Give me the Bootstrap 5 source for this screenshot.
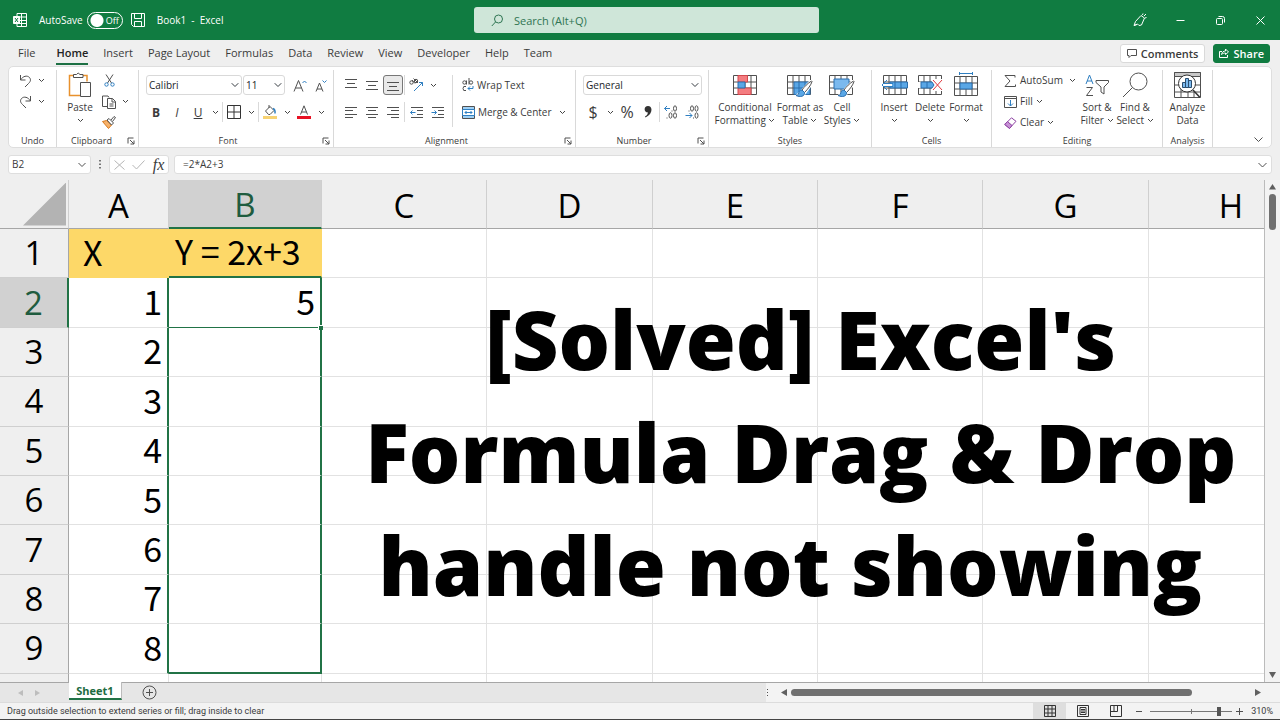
<!DOCTYPE html>
<html lang="en">
<head>
<meta charset="utf-8">
<meta name="viewport" content="width=device-width, initial-scale=1">
<title>Book1 - Excel</title>
<link href="https://cdn.jsdelivr.net/npm/bootstrap@5.3.0/dist/css/bootstrap.min.css" rel="stylesheet">
<style>
:root{--xl:#107c41;--ink:#3b3b3b;--line:#d9d9d9;--sel:#217346}
body{font-family:"Open Sans","Noto Sans",sans-serif;font-size:10px;line-height:13px;color:var(--ink);background:#efefef}
svg{display:block;fill:none;stroke:#505050;stroke-width:1;flex:none}
button,input,select{font-family:inherit;color:inherit}
.app{height:100vh;min-height:720px;overflow:hidden}
.titlebar{background:var(--xl);height:40px;color:#fff}
.titlebar svg{stroke:#fff}
.tb-left{flex:1 1 13px;padding-left:13px}
.tb-right{flex:1 1 0px}
.search-box{width:345px;height:26px;background:#cfe6d9;border-radius:3px;padding-left:17px;gap:10px;color:#2f7553}
.search-box svg{stroke:#2f7553}
.search-box input{font-size:11px;height:26px}
.search-box input::placeholder{color:#2f7553}
.bare{background:none;border:0;padding:0;outline:0}
.save-switch{width:36px;height:17px}
.save-switch .form-check-input{width:36px;height:17px;margin:0;background-color:transparent;border-color:#fff;background-image:radial-gradient(circle at 9px 50%,#fff 6px,transparent 7px);background-position:0 0;background-size:100%}
.save-switch label{position:absolute;left:19px;top:2px;font-size:9px;line-height:13px;pointer-events:none}
.win{width:40px;height:40px;display:grid;place-items:center}
.tabs{height:26px;padding:0 10px 0 18px;font-size:11px}
.tabs nav{gap:15px}
.tabs nav a{color:var(--ink);text-decoration:none;line-height:21px;height:23px;border-bottom:2px solid transparent}
.tabs nav a:first-child{margin-right:6px}
.tabs nav a.active{font-weight:600;color:#222;border-color:#1d7044}
.act{height:19px;border-radius:3px;border:1px solid var(--line);background:#fff;font-size:11px;font-weight:600;gap:4px;padding:0 6px}
.act-share{background:var(--xl);border-color:var(--xl);color:#fff;padding:0 5px}
.act-share svg{stroke:#fff}
.ribbon{height:82px;margin:0 8px;background:#fff;border:1px solid #dedede;border-radius:5px;padding-top:3px}
.grp{border-right:1px solid var(--line)}
.grp-foot{height:13px;font-size:9px;line-height:13px}
.grp-foot svg{position:absolute;right:3px;top:3px}
.g-undo{width:48px}.g-clip{width:82px}.g-font{width:195px}.g-align{width:242px}.g-num{width:133px}
.g-style{width:163px}.g-cells{width:120px}.g-edit{width:171px}.g-ana{width:50px}
.undo-pad{padding-left:6px}
.tool{background:none;border:0;padding:0;width:20px;height:20px;display:grid;place-items:center;flex:none;font-size:12px}
.tool-on{background:#e9e9e9;border:1px solid #777;border-radius:3px}
.drop{width:12px}
.rule{width:1px;height:20px;background:var(--line);flex:none}
.rule-tall{width:1px;height:52px;background:var(--line);margin:0 5px}
.two-rows{padding:5px 0 0 7px}
.tool-row{display:flex;gap:1px;align-items:center;height:20px;margin-bottom:7px}
.three-row{display:flex;align-items:center;height:21px}
.pick{height:20px;font-size:10px;line-height:12px;padding:0 12px 0 2px;border:1px solid var(--line);border-radius:3px;background-size:8px;background-position:right 2px center}
.pick-font{width:96px}.pick-size{width:42px}.pick-num{width:119px}
.big{background:none;border:0;padding:2px 0 0;display:flex;flex-direction:column;align-items:center;line-height:13px;white-space:nowrap}
.big svg.pic{margin-bottom:3px}
.b64{width:64px}.b46{width:46px}.b38{width:38px}.b36{width:36px}
.inl{background:none;border:0;padding:0;display:flex;align-items:center;gap:3px;white-space:nowrap}
.chev{display:inline-block;vertical-align:1px;stroke:#444}
.fx-row{height:32px;padding:7px 8px 6px;gap:5px}
.fx-box{height:19px;background:#fff;border:1px solid #dedede;border-radius:3px}
.fx-name{width:83px}.fx-tools{width:60px}
.fx-name input{width:60px;padding-left:3px}
.fx-mark{font:italic 16px/15px "Liberation Serif",serif}
.sheet{position:relative;overflow:hidden;background:#fff}
.grid{table-layout:fixed;width:1314px;height:543px;border-collapse:separate;border-spacing:0;color:#000}
.grid tbody tr{height:49px}
.grid th,.grid td{padding:0;line-height:40px;border:0 solid #e2e2e2;border-width:0 1px 1px 0;overflow:hidden;white-space:nowrap;vertical-align:middle}
.grid thead th{height:49px;background:#efefef;font-size:33px;font-weight:400;text-align:center;padding-top:3px;border-color:#cfcfcf;border-bottom-color:#a6a6a6}
.grid thead th:first-child{padding-top:0}
.grid tbody th{background:#efefef;font-size:33px;font-weight:400;text-align:center;border-color:#cfcfcf;border-right-color:#a6a6a6}
.grid td{font-family:"Noto Sans CJK JP","Open Sans",sans-serif;font-size:34px;text-align:right;padding:0 5px 3px 0}
.grid thead th.hot{background:#d1d1d1;color:#1f5c3f;border-bottom:2px solid var(--sel)}
.grid tbody th.hot{background:#d1d1d1;color:#1f5c3f;border-right:2px solid var(--sel)}
.grid td.gold{background:#fdd868;border-color:#fdd868;text-align:left;padding-left:14px}
.grid td.gold-y{padding-left:6px;border-bottom:2px solid var(--sel)}
.grid td.pre{border-right:2px solid var(--sel)}
.grid td.pick-cell{border-right:2px solid var(--sel)}
.grid td.first{position:relative;overflow:visible;border-bottom-color:var(--sel)}
.grid td.first::after{content:"";position:absolute;right:-3px;bottom:-3px;width:5px;height:5px;background:var(--sel);border:solid #fff;border-width:1px 0 0 1px}
.grid td.last{border-bottom:2px solid var(--sel)}
.c-h{width:69px}.c-a{width:100px}.c-b{width:153px}.c-n{width:165px}.c-w{width:166px}
.corner{width:43px;height:43px;margin:0 2px 0 auto;background:#b3b3b3;clip-path:polygon(100% 0,100% 100%,0 100%)}
.caption-over{position:absolute;left:321px;right:-17px;top:102px;margin:0;text-align:center;color:#000;font-size:81px;line-height:113px;font-weight:800}
.vbar{width:17px;background:#f3f3f3;border-left:1px solid #bbb}
.knob-v{width:7px;height:36px;background:#707070;border-radius:4px}
.sheetbar{height:20px;background:#e6e6e6;border-top:1px solid #a6a6a6}
.page-nav{width:69px;padding-left:18px;gap:12px}
.sheet-tab{width:53px;height:18px;margin-top:-1px;background:#fff;border:0;border-bottom:2px solid var(--sel);border-right:1px solid #bbb;color:#1d6b41;font-weight:700;font-size:11px;line-height:15px;padding:0}
.hbar{width:514px;background:#f3f3f3;gap:4px;padding:0 19px 0 0}
.knob-h{width:401px;height:7px;background:#707070;border-radius:4px}
.statusbar{height:18px;background:#f3f3f3;border-top:1px solid #dcdcdc;border-bottom:1px solid #444;font-family:Roboto,"Open Sans",sans-serif;font-size:9px;padding:0 7px}
.view{width:33px;height:16px;border:0;padding:0;background:none;display:grid;place-items:center}
.view-on{background:#dedede}
.zoomer{appearance:none;width:82px;height:12px;margin:0;background:linear-gradient(#777,#777) center/100% 1px no-repeat,linear-gradient(#777,#777) center/1px 5px no-repeat}
.zoomer::-webkit-slider-thumb{appearance:none;width:4px;height:9px;background:#555}
</style>
</head>
<body>
<svg width="0" height="0" class="position-absolute" aria-hidden="true">
  <symbol id="cv" viewBox="0 0 7 5"><path d="M1 1l2.500 2.500L6 1"/></symbol>
  <symbol id="launch" viewBox="0 0 8 8"><path d="M1 6.500V1h5.500M3 3l4 4M7 3.500V7H3.500"/></symbol>
  <symbol id="tablegrid" viewBox="0 0 24 20"><path fill="#fff" d="M.5.500h23v19H.5zM.5 7h23M.5 13h23M6 .5v19M12 .5v19M18 .5v19"/></symbol>
  <symbol id="brush" viewBox="0 0 18 18"><path fill="#fff" stroke="#fff" stroke-width="3" d="M16 1L7 11l-5 5 6-1 9-12z"/><path fill="#fff" d="M16.500 1C13 3 9 7 7 10l2.500 2.500C13 9 16 5 17 1.500z"/><path fill="#5aa7e6" stroke="#2b6fae" d="M7 10c-3 0-3 2-3.500 4-.5 1-1.500 1.500-2.500 1.500 4 2 9 1 8.500-3z"/></symbol>
</svg>
<div class="app d-flex flex-column">
  <header class="titlebar d-flex align-items-center flex-shrink-0">
    <div class="tb-left d-flex align-items-center">
      <svg width="14" height="14" viewBox="0 0 14 14"><path d="M4 .5h9.500v13H4zM4 4h9.500M4 7.500h9.500M4 10.500h9.500M8.500.5v13"/><path fill="#fff" d="M.5 3.500h6v7h-6z"/><path stroke="#107c41" d="M2 5l3 4M5 5L2 9"/></svg>
      <span class="ms-2 ps-1 me-1">AutoSave</span>
      <div class="save-switch form-switch position-relative p-0"><input class="form-check-input" type="checkbox" role="switch" id="autosave" aria-label="AutoSave"><label for="autosave">Off</label></div>
      <button class="bare ms-2" aria-label="Save"><svg width="14" height="14" viewBox="0 0 14 14"><path d="M.5.500h13v13h-11l-2-2zM3.500.5v5h7v-5M3.500 13.500v-5h7v5"/></svg></button>
      <span class="ms-2 ps-1">Book1&nbsp; -&nbsp; Excel</span>
    </div>
    <div class="search-box d-flex align-items-center">
      <svg width="13" height="13" viewBox="0 0 13 13"><circle cx="7.500" cy="5" r="4"/><path d="M4.500 8L.8 12"/></svg>
      <input class="bare flex-grow-1" type="search" placeholder="Search (Alt+Q)" aria-label="Search">
    </div>
    <div class="tb-right d-flex justify-content-end">
      <button class="bare win" aria-label="Coming soon"><svg width="14" height="14" viewBox="0 0 14 14"><path d="M1 12.500l1.500-4L8 2.500l3.500 2.500-3 7-2.500.5-1.500-1.500zM1 12.500l3-1M9.500 2L10 .5M11 3l2-2M12 5l1.500-.5"/></svg></button>
      <button class="bare win" aria-label="Minimize"><svg width="9" height="9" viewBox="0 0 9 9"><path d="M.5 4.500h8"/></svg></button>
      <button class="bare win" aria-label="Restore"><svg width="9" height="9" viewBox="0 0 9 9"><rect x=".5" y="2.500" width="6" height="6" rx="1"/><path d="M2.500.5h4q2 0 2 2v4"/></svg></button>
      <button class="bare win" aria-label="Close"><svg width="9" height="9" viewBox="0 0 9 9"><path d="M.5.500l8 8M8.500.500l-8 8"/></svg></button>
    </div>
  </header>

  <div class="tabs d-flex align-items-center justify-content-between flex-shrink-0">
    <nav class="d-flex text-nowrap">
      <a href="#">File</a><a href="#" class="active">Home</a><a href="#">Insert</a><a href="#">Page Layout</a><a href="#">Formulas</a><a href="#">Data</a><a href="#">Review</a><a href="#">View</a><a href="#">Developer</a><a href="#">Help</a><a href="#">Team</a>
    </nav>
    <div class="d-flex gap-2">
      <button class="act d-flex align-items-center"><svg width="10" height="9" viewBox="0 0 10 9"><path d="M.5.500h9v6H4L2 8.500v-2H.5z"/></svg>Comments</button>
      <button class="act act-share d-flex align-items-center"><svg width="10" height="10" viewBox="0 0 10 10"><path d="M3 3.500H.5v6h8V7M2.500 6.500C3 4 4.500 3 6.500 3V1L9.500 4l-3 2.500V5C5 5 3.500 5.500 2.500 6.500z"/></svg>Share</button>
    </div>
  </div>

  <section class="ribbon d-flex flex-shrink-0" aria-label="Home ribbon">
    <div class="grp g-undo d-flex flex-column">
      <div class="flex-grow-1 undo-pad">
        <div class="three-row"><button class="tool" aria-label="Undo"><svg width="13" height="14" viewBox="0 0 13 14"><path d="M1.500 1v5h5M1.500 6C4 2 8 1 10.500 3.500c2 2.500.5 4.500-1 6L6 13"/></svg></button><button class="tool drop" aria-label="Undo list"><svg class="chev" width="7" height="5"><use href="#cv"/></svg></button></div>
        <div class="three-row"><button class="tool" aria-label="Redo"><svg width="13" height="14" viewBox="0 0 13 14"><path d="M11.500 1v5h-5M11.500 6C9 2 5 1 2.500 3.500c-2 2.500-.5 4.500 1 6L7 13"/></svg></button><button class="tool drop" aria-label="Redo list"><svg class="chev" width="7" height="5"><use href="#cv"/></svg></button></div>
      </div>
      <div class="grp-foot text-center">Undo</div>
    </div>
    <div class="grp g-clip d-flex flex-column">
      <div class="flex-grow-1 d-flex ps-1">
        <button class="big b38"><svg class="pic" width="24" height="26" viewBox="0 0 24 26"><path stroke="#e8912d" stroke-width="1.500" d="M6 3.500H1.500v20H12M15 3.500h4v6"/><path fill="#fff" d="M5.500 5.500v-3h3q1.500-3 3.500 0h3v3z"/><path fill="#fff" d="M12.500 10.500h10v14h-10z"/></svg>Paste<svg class="chev mt-1" width="7" height="5"><use href="#cv"/></svg></button>
        <div>
          <div class="three-row"><button class="tool" aria-label="Cut"><svg width="11" height="13" viewBox="0 0 11 13"><path d="M2 .5l5.500 8.500M9 .5L3.500 9"/><circle cx="2.500" cy="10.500" r="1.700" stroke="#2f7fc1"/><circle cx="8.500" cy="10.500" r="1.700" stroke="#2f7fc1"/></svg></button></div>
          <div class="three-row"><button class="tool" aria-label="Copy"><svg width="14" height="14" viewBox="0 0 14 14"><path d="M5 11.500H.5V1H6l1 1.500"/><path fill="#fff" d="M5.500 3.500h5l3 3v7h-8zM10 3.500V7h3.500M7.500 9h4M7.500 11h4"/></svg></button><button class="tool drop" aria-label="Copy options"><svg class="chev" width="7" height="5"><use href="#cv"/></svg></button></div>
          <div class="three-row"><button class="tool" aria-label="Format Painter"><svg width="14" height="13" viewBox="0 0 14 13"><path fill="#f6b26b" stroke="#d87a1e" d="M.5 5.500l4-1 5 4.500-3 3.500z"/><path fill="#fff" d="M5 4l2-1.500 4.500 4.500-2 2zM9 4l3-3.500 1.500 1L10.500 5.500"/></svg></button></div>
        </div>
      </div>
      <div class="grp-foot text-center position-relative pe-2"><span class="pe-1">Clipboard</span><svg width="8" height="8"><use href="#launch"/></svg></div>
    </div>
    <div class="grp g-font d-flex flex-column">
      <div class="flex-grow-1 two-rows">
        <div class="tool-row"><select class="form-select pick pick-font" aria-label="Font"><option>Calibri</option></select><select class="form-select pick pick-size" aria-label="Font size"><option>11</option></select>
          <button class="tool ms-1" aria-label="Increase font size"><svg width="14" height="13" viewBox="0 0 14 13"><path d="M1 12.500L5.500 1.500 10 12.500M2.500 9h6"/><path stroke="#2f7fc1" d="M9.500 4l2-2 2 2"/></svg></button>
          <button class="tool" aria-label="Decrease font size"><svg width="14" height="13" viewBox="0 0 14 13"><path d="M2 12.500L5.500 4 9 12.500M3 10h5"/><path stroke="#2f7fc1" d="M8.500 1.500l2 2 2-2"/></svg></button></div>
        <div class="tool-row"><button class="tool fw-bold">B</button><button class="tool fst-italic">I</button><button class="tool text-decoration-underline">U</button><button class="tool drop" aria-label="Underline options"><svg class="chev" width="7" height="5"><use href="#cv"/></svg></button><span class="rule"></span>
          <button class="tool" aria-label="Borders"><svg width="14" height="14" viewBox="0 0 14 14"><path stroke="#333" d="M.5.500h13v13H.5zM7 .5v13M.5 7h13"/></svg></button><button class="tool drop" aria-label="Border options"><svg class="chev" width="7" height="5"><use href="#cv"/></svg></button><span class="rule"></span>
          <button class="tool" aria-label="Fill colour"><svg width="14" height="14" viewBox="0 0 14 14"><path fill="#f7d272" stroke="none" d="M0 11h14v3H0z"/><path d="M2.500 6l4.500-4.500L11 5.500 7 9.500H5.500zM6 3V0"/><path stroke="#2f7fc1" stroke-width="1.500" d="M10 3.500q2.500 1 2 5"/></svg></button><button class="tool drop" aria-label="Fill options"><svg class="chev" width="7" height="5"><use href="#cv"/></svg></button>
          <button class="tool" aria-label="Font colour"><svg width="14" height="14" viewBox="0 0 14 14"><path fill="#e81123" stroke="none" d="M0 11h14v3H0z"/><path d="M3.500 9.500L7 .8l3.500 8.700M4.500 7h5"/></svg></button><button class="tool drop" aria-label="Font colour options"><svg class="chev" width="7" height="5"><use href="#cv"/></svg></button></div>
      </div>
      <div class="grp-foot text-center position-relative pe-3">Font<svg width="8" height="8"><use href="#launch"/></svg></div>
    </div>
    <div class="grp g-align d-flex flex-column">
      <div class="flex-grow-1 d-flex two-rows">
        <div>
          <div class="tool-row"><button class="tool" aria-label="Top align"><svg width="12" height="14" viewBox="0 0 12 14"><path d="M0 1.500h12M2 5.500h8M0 9.500h12"/></svg></button><button class="tool" aria-label="Middle align"><svg width="12" height="12" viewBox="0 0 12 12"><path d="M0 2.500h12M2 6.500h8M0 10.500h12"/></svg></button><button class="tool tool-on" aria-label="Bottom align"><svg width="12" height="12" viewBox="0 0 12 12"><path d="M0 3.500h12M2 7.500h8M0 11.500h12"/></svg></button><span class="rule"></span>
            <button class="tool" aria-label="Orientation"><svg width="15" height="14" viewBox="0 0 15 14"><circle cx="2.500" cy="4.500" r="1.700"/><path d="M3 2l3 3.500M4.500.500L9 5"/><circle cx="7" cy="3" r="1.700"/><path stroke="#2f7fc1" d="M5 13l8.500-8.500M10 4.500h3.500V8"/></svg></button><button class="tool drop" aria-label="Orientation options"><svg class="chev" width="7" height="5"><use href="#cv"/></svg></button></div>
          <div class="tool-row"><button class="tool" aria-label="Align left"><svg width="12" height="13" viewBox="0 0 12 13"><path d="M0 1.500h12M0 4.500h8M0 8.500h12M0 11.500h8"/></svg></button><button class="tool" aria-label="Center"><svg width="12" height="13" viewBox="0 0 12 13"><path d="M0 1.500h12M2 4.500h8M0 8.500h12M2 11.500h8"/></svg></button><button class="tool" aria-label="Align right"><svg width="12" height="13" viewBox="0 0 12 13"><path d="M0 1.500h12M4 4.500h8M0 8.500h12M4 11.500h8"/></svg></button><span class="rule"></span>
            <button class="tool" aria-label="Decrease indent"><svg width="13" height="13" viewBox="0 0 13 13"><path d="M1 1.500h12M7 4.500h6M7 8.500h6M1 11.500h12"/><path stroke="#2f7fc1" d="M5.500 6.500h-5M2.500 4.500l-2 2 2 2"/></svg></button><button class="tool" aria-label="Increase indent"><svg width="13" height="13" viewBox="0 0 13 13"><path d="M1 1.500h12M7 4.500h6M7 8.500h6M1 11.500h12"/><path stroke="#2f7fc1" d="M.5 6.500h5M3.500 4.500l2 2-2 2"/></svg></button></div>
        </div>
        <span class="rule-tall"></span>
        <div class="ps-1">
          <div class="tool-row"><button class="inl"><svg width="12" height="14" viewBox="0 0 12 14"><circle cx="2.500" cy="4.500" r="1.700"/><path d="M4.500 2.500v4M7 0v6.500M4 8.500q-3-1-3 2t3 2"/><circle cx="9" cy="4.500" r="1.700"/><path stroke="#2f7fc1" d="M11 8v2.500H6M8 8.500l-2 2 2 2"/></svg>Wrap Text</button></div>
          <div class="tool-row"><button class="inl"><svg width="13" height="13" viewBox="0 0 13 13"><path fill="#9fd0f5" d="M.5.500h12v12H.5z"/><path fill="#fff" stroke="#2f7fc1" d="M.5 3.500h12v6H.5zM3 6.500h7M4.500 5L3 6.500 4.500 8M8.500 5L10 6.500 8.500 8"/></svg>Merge &amp; Center</button><button class="tool drop ms-1" aria-label="Merge options"><svg class="chev" width="7" height="5"><use href="#cv"/></svg></button></div>
        </div>
      </div>
      <div class="grp-foot text-center position-relative pe-3">Alignment<svg width="8" height="8"><use href="#launch"/></svg></div>
    </div>
    <div class="grp g-num d-flex flex-column">
      <div class="flex-grow-1 two-rows">
        <div class="tool-row"><select class="form-select pick pick-num" aria-label="Number format"><option>General</option></select></div>
        <div class="tool-row"><button class="tool fs-6">$</button><button class="tool drop" aria-label="Currency options"><svg class="chev" width="7" height="5"><use href="#cv"/></svg></button><button class="tool fs-6">%</button>
          <button class="tool" aria-label="Comma style"><svg width="8" height="12" viewBox="0 0 8 12"><path fill="#333" stroke="none" d="M4 0c5 0 5 8-2.500 11.500L1 10.500Q4 8.500 4 6.500C-.5 6.500-.5 0 4 0z"/></svg></button><span class="rule"></span>
          <button class="tool" aria-label="Increase decimal"><svg width="14" height="14" viewBox="0 0 14 14"><path stroke="#2f7fc1" d="M6 3.500H.5M3 1L.5 3.500 3 6"/><ellipse cx="11" cy="3.500" rx="1.500" ry="2.700"/><ellipse cx="6.500" cy="10.500" rx="1.500" ry="2.700"/><ellipse cx="11" cy="10.500" rx="1.500" ry="2.700"/><path d="M7.500 6h1M2.500 13h1"/></svg></button>
          <button class="tool" aria-label="Decrease decimal"><svg width="14" height="14" viewBox="0 0 14 14"><ellipse cx="7" cy="3.500" rx="1.500" ry="2.700"/><ellipse cx="11.500" cy="3.500" rx="1.500" ry="2.700"/><ellipse cx="11.500" cy="10.500" rx="1.500" ry="2.700"/><path d="M3.500 6h1M8 13h1"/><path stroke="#2f7fc1" d="M.5 10.500H7M4.500 8L7 10.500 4.500 13"/></svg></button></div>
      </div>
      <div class="grp-foot text-center position-relative pe-3">Number<svg width="8" height="8"><use href="#launch"/></svg></div>
    </div>
    <div class="grp g-style d-flex flex-column">
      <div class="flex-grow-1 d-flex ps-1">
        <button class="big b64"><svg class="pic" width="24" height="26" viewBox="0 0 24 26"><use href="#tablegrid" x="0" y="3" width="24" height="20"/><path fill="#f47c80" stroke="#d3494e" d="M5 3.500h9.500V10H5zM5 16h13v6.500H5z"/><path fill="#5aa7e6" stroke="#2b6fae" d="M5 10h7v6H5z"/></svg>Conditional<span>Formatting <svg class="chev" width="7" height="5"><use href="#cv"/></svg></span></button>
        <button class="big b46"><svg class="pic" width="26" height="26" viewBox="0 0 26 26"><use href="#tablegrid" x="0" y="3" width="24" height="20"/><path fill="#5aa7e6" stroke="#2b6fae" d="M7 10h16v12.500H7zM7 16h16M12 10v12M18 10v12"/><use href="#brush" x="8" y="8" width="18" height="18"/></svg>Format as<span>Table <svg class="chev" width="7" height="5"><use href="#cv"/></svg></span></button>
        <button class="big b38"><svg class="pic" width="26" height="26" viewBox="0 0 26 26"><use href="#tablegrid" x="0" y="3" width="24" height="20"/><path fill="#7bb9ee" stroke="#2b6fae" d="M5 7h15v10H5z"/><use href="#brush" x="8" y="8" width="18" height="18"/></svg>Cell<span>Styles <svg class="chev" width="7" height="5"><use href="#cv"/></svg></span></button>
      </div>
      <div class="grp-foot text-center">Styles</div>
    </div>
    <div class="grp g-cells d-flex flex-column">
      <div class="flex-grow-1 d-flex ps-1">
        <button class="big b36"><svg class="pic" width="27" height="26" viewBox="0 0 27 26"><use href="#tablegrid" x="2" y="3" width="24" height="20"/><path fill="#5aa7e6" stroke="#2b6fae" d="M9 10h17.500v6H9zM14 10v6M20 10v6"/><path stroke="#fff" stroke-width="4" d="M1 13h10"/><path stroke="#2f7fc1" d="M12 11.500H3M12 14.500H3M6 8l-5 5 5 5"/></svg>Insert<svg class="chev mt-1" width="7" height="5"><use href="#cv"/></svg></button>
        <button class="big b36"><svg class="pic" width="26" height="26" viewBox="0 0 26 26"><use href="#tablegrid" x="1" y="3" width="24" height="20"/><path fill="#fff" stroke="none" d="M0 10h26v6H0zM15 7h11v12H15z"/><path fill="#5aa7e6" stroke="#2b6fae" d="M4 10h11l2 3-2 3H4zM10 10v6"/><path stroke="#e0383e" d="M16 8l9 10M25 8l-9 10"/></svg>Delete<svg class="chev mt-1" width="7" height="5"><use href="#cv"/></svg></button>
        <button class="big b36"><svg class="pic" width="24" height="26" viewBox="0 0 24 26"><path stroke="#2f7fc1" d="M5.500 0v3M18.500 0v3M5.500 1.500h13"/><use href="#tablegrid" x="0" y="4" width="24" height="20"/><path fill="#5aa7e6" stroke="#2b6fae" d="M6 11h12v6H6z"/></svg>Format<svg class="chev mt-1" width="7" height="5"><use href="#cv"/></svg></button>
      </div>
      <div class="grp-foot text-center">Cells</div>
    </div>
    <div class="grp g-edit d-flex flex-column">
      <div class="flex-grow-1 d-flex">
        <div class="flex-grow-1 ps-2 ms-1">
          <div class="three-row justify-content-between"><button class="inl"><svg width="13" height="12" viewBox="0 0 13 12"><path d="M11 2.500V.5H1L6 6l-5 5.500h10.500v-2"/></svg>AutoSum</button><button class="tool drop" aria-label="AutoSum options"><svg class="chev" width="7" height="5"><use href="#cv"/></svg></button></div>
          <div class="three-row"><button class="inl"><svg width="13" height="12" viewBox="0 0 13 12"><path d="M.5.500h12v11H.5zM.5 2.500h12"/><path stroke="#2f7fc1" d="M6.500 4v6M4 7.500L6.500 10 9 7.500"/></svg>Fill<svg class="chev" width="7" height="5"><use href="#cv"/></svg></button></div>
          <div class="three-row"><button class="inl"><svg width="13" height="12" viewBox="0 0 13 12"><path fill="#fff" stroke="#8b3fa0" d="M.8 7.500L7.500.8l4.500 3.500-6.500 7z"/><path fill="#c792d6" stroke="#8b3fa0" d="M.8 7.500l2.700-3 4.500 4-2.500 3z"/></svg>Clear<svg class="chev" width="7" height="5"><use href="#cv"/></svg></button></div>
        </div>
        <button class="big b38"><svg class="pic" width="24" height="26" viewBox="0 0 24 26"><path stroke="#2f7fc1" d="M1 12L4.500 3 8 12M2 9h5"/><path d="M1.500 15.500h6l-6 8h6.500M11 8.500h12.500v2L19 15v7l-3-2v-5l-5-4.500z"/></svg>Sort &amp;<span>Filter <svg class="chev" width="7" height="5"><use href="#cv"/></svg></span></button>
        <button class="big b38 me-2"><svg class="pic" width="26" height="26" viewBox="0 0 26 26"><circle cx="16.500" cy="9.500" r="8.500"/><path d="M10.500 15.500L1 25"/></svg>Find &amp;<span>Select <svg class="chev" width="7" height="5"><use href="#cv"/></svg></span></button>
      </div>
      <div class="grp-foot text-center">Editing</div>
    </div>
    <div class="grp g-ana d-flex flex-column">
      <div class="flex-grow-1 d-flex justify-content-center">
        <button class="big"><svg class="pic" width="27" height="26" viewBox="0 0 27 26"><path d="M.5.500h26v25H.5zM.5 13h26M.5 20h26M7 13v12M14 20v5M20 20v5"/><path fill="#c8c8c8" d="M.5.500h26v4H.5z"/><circle cx="13" cy="11.500" r="8.500" fill="#fff" stroke="#333"/><path stroke="#333" stroke-width="1.500" d="M19 18l7 7.500"/><path fill="#7bb9ee" stroke="#2b4d6e" d="M8.500 10.500h3v5h-3zM11.500 6.500h3v9h-3zM14.500 8.500h3v7h-3z"/></svg>Analyze<span>Data</span></button>
      </div>
      <div class="grp-foot text-center">Analysis</div>
    </div>
    <button class="bare ms-auto align-self-end p-1 me-1" aria-label="Collapse ribbon"><svg width="9" height="7" viewBox="0 0 9 7"><path d="M.5 1.500l4 4 4-4"/></svg></button>
  </section>

  <div class="fx-row d-flex align-items-center flex-shrink-0">
    <div class="fx-box fx-name d-flex align-items-center justify-content-between pe-1"><input class="bare" value="B2" aria-label="Name box"><svg width="8" height="6" viewBox="0 0 8 6"><path d="M.5 1L4 4.500 7.500 1"/></svg></div>
    <svg width="8" height="10" viewBox="0 0 8 10"><path stroke-dasharray="1.500 2" stroke-width="1.500" d="M4 0v10"/></svg>
    <div class="fx-box fx-tools d-flex align-items-center justify-content-around">
      <button class="bare" aria-label="Cancel"><svg width="11" height="10" viewBox="0 0 11 10"><path stroke="#b5b5b5" d="M.5.500l10 9M10.500.500l-10 9"/></svg></button>
      <button class="bare" aria-label="Enter"><svg width="13" height="10" viewBox="0 0 13 10"><path stroke="#b5b5b5" d="M.5 5l4 4L12.500.500"/></svg></button>
      <button class="bare fx-mark" aria-label="Insert function">fx</button>
    </div>
    <div class="fx-box flex-grow-1 d-flex align-items-center ps-2 pe-1"><input class="bare flex-grow-1" value="=2*A2+3" aria-label="Formula bar"><svg width="9" height="6" viewBox="0 0 9 6"><path d="M.5 1l4 4 4-4"/></svg></div>
  </div>

  <main class="d-flex flex-grow-1 overflow-hidden">
    <div class="sheet flex-grow-1">
      <table class="grid">
        <colgroup><col class="c-h"><col class="c-a"><col class="c-b"><col class="c-n"><col class="c-w"><col class="c-n"><col class="c-n"><col class="c-w"><col class="c-n"></colgroup>
        <thead><tr><th><div class="corner"></div></th><th>A</th><th class="hot">B</th><th>C</th><th>D</th><th>E</th><th>F</th><th>G</th><th>H</th></tr></thead>
        <tbody>
          <tr><th>1</th><td class="gold">X</td><td class="gold gold-y">Y = 2x+3</td><td></td><td></td><td></td><td></td><td></td><td></td></tr>
          <tr><th class="hot">2</th><td class="pre">1</td><td class="pick-cell first">5</td><td></td><td></td><td></td><td></td><td></td><td></td></tr>
          <tr><th>3</th><td class="pre">2</td><td class="pick-cell"></td><td></td><td></td><td></td><td></td><td></td><td></td></tr>
          <tr><th>4</th><td class="pre">3</td><td class="pick-cell"></td><td></td><td></td><td></td><td></td><td></td><td></td></tr>
          <tr><th>5</th><td class="pre">4</td><td class="pick-cell"></td><td></td><td></td><td></td><td></td><td></td><td></td></tr>
          <tr><th>6</th><td class="pre">5</td><td class="pick-cell"></td><td></td><td></td><td></td><td></td><td></td><td></td></tr>
          <tr><th>7</th><td class="pre">6</td><td class="pick-cell"></td><td></td><td></td><td></td><td></td><td></td><td></td></tr>
          <tr><th>8</th><td class="pre">7</td><td class="pick-cell"></td><td></td><td></td><td></td><td></td><td></td><td></td></tr>
          <tr><th>9</th><td class="pre">8</td><td class="pick-cell last"></td><td></td><td></td><td></td><td></td><td></td><td></td></tr>
          <tr><th></th><td></td><td></td><td></td><td></td><td></td><td></td><td></td><td></td></tr>
        </tbody>
      </table>
      <h1 class="caption-over">[Solved] Excel's<br>Formula Drag &amp; Drop<br>handle not showing&nbsp;</h1>
    </div>
    <div class="vbar d-flex flex-column align-items-center pt-1 pb-1">
      <svg width="7" height="6" viewBox="0 0 7 6"><path fill="#606060" stroke="none" d="M0 5.500L3.500 0 7 5.500z"/></svg>
      <div class="knob-v mt-1"></div>
      <svg class="mt-auto" width="7" height="6" viewBox="0 0 7 6"><path fill="#606060" stroke="none" d="M0 0h7L3.500 6z"/></svg>
    </div>
  </main>

  <div class="sheetbar d-flex flex-shrink-0">
    <div class="page-nav d-flex align-items-center"><svg width="5" height="6" viewBox="0 0 5 6"><path fill="#bdbdbd" stroke="none" d="M5 0v6L0 3z"/></svg><svg width="5" height="6" viewBox="0 0 5 6"><path fill="#bdbdbd" stroke="none" d="M0 0v6l5-3z"/></svg></div>
    <button class="sheet-tab">Sheet1</button>
    <button class="bare ms-3 ps-1" aria-label="New sheet"><svg width="15" height="15" viewBox="0 0 15 15"><circle cx="7.500" cy="7.500" r="6.500"/><path d="M7.500 4v7M4 7.500h7"/></svg></button>
    <div class="hbar ms-auto d-flex align-items-center">
      <svg width="3" height="8" viewBox="0 0 3 8"><path stroke-dasharray="1 2" d="M1.500 0v8"/></svg>
      <svg class="ms-2" width="6" height="7" viewBox="0 0 6 7"><path fill="#606060" stroke="none" d="M6 0v7L0 3.500z"/></svg>
      <div class="knob-h"></div>
      <svg class="ms-auto" width="6" height="7" viewBox="0 0 6 7"><path fill="#606060" stroke="none" d="M0 0v7l6-3.500z"/></svg>
    </div>
  </div>
  <footer class="statusbar d-flex align-items-center flex-shrink-0">
    <span class="me-auto">Drag outside selection to extend series or fill; drag inside to clear</span>
    <button class="view view-on" aria-label="Normal"><svg width="12" height="12" viewBox="0 0 12 12"><path stroke="#333" d="M.5.500h11v11H.5zM.5 4h11M.5 8h11M4 .5v11M8 .5v11"/></svg></button>
    <button class="view" aria-label="Page layout"><svg width="12" height="12" viewBox="0 0 12 12"><path stroke="#333" d="M.5.500h11v11H.5zM3 2.500h6v7H3zM4 4.500h4M4 6h4M4 7.500h4"/></svg></button>
    <button class="view" aria-label="Page break preview"><svg width="12" height="12" viewBox="0 0 12 12"><path stroke="#333" d="M.5.500h11v11H.5zM.5 6.500h7v-6M4 .5v6"/></svg></button>
    <button class="bare ms-1 me-2" aria-label="Zoom out"><svg width="6" height="7" viewBox="0 0 6 7"><path d="M0 3.500h6"/></svg></button>
    <input class="zoomer" type="range" min="0" max="100" value="86" aria-label="Zoom">
    <button class="bare ms-1 me-2 ps-0" aria-label="Zoom in"><svg width="7" height="7" viewBox="0 0 7 7"><path d="M0 3.500h7M3.500 0v7"/></svg></button>
    <span>310%</span>
  </footer>
</div>
<script src="https://cdn.jsdelivr.net/npm/bootstrap@5.3.0/dist/js/bootstrap.bundle.min.js"></script>
</body>
</html>
